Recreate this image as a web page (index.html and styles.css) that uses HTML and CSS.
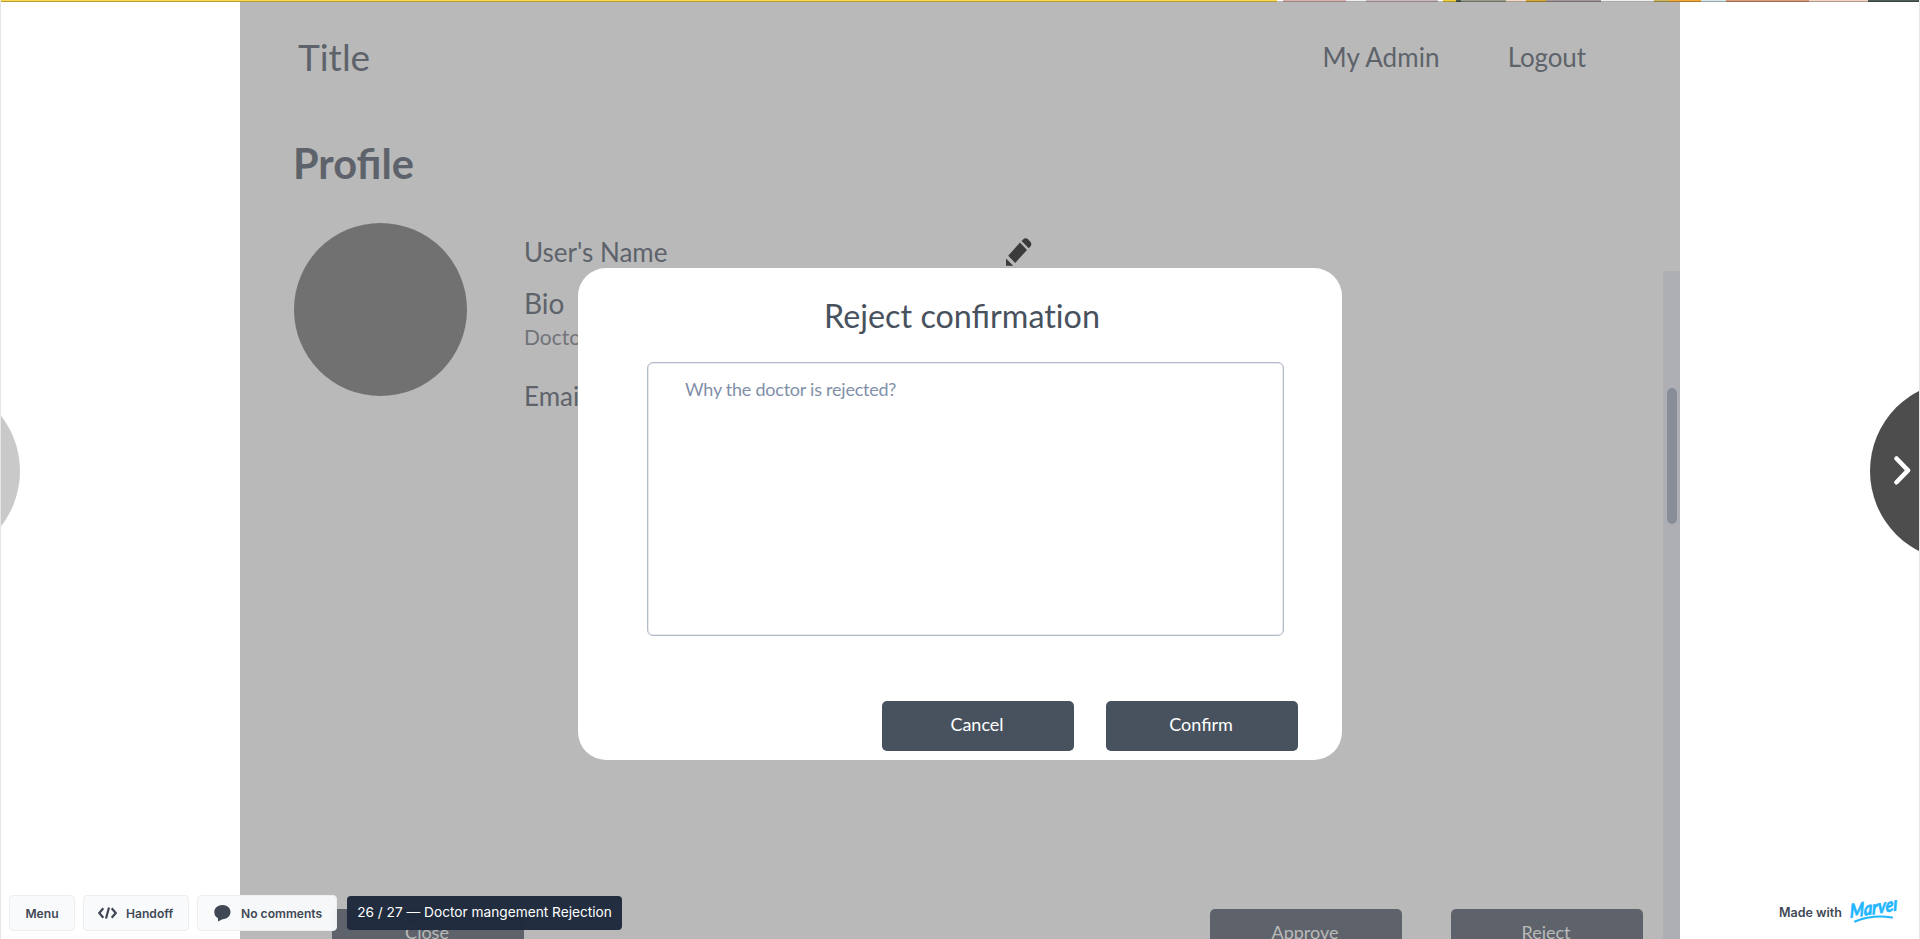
FILE: index.html
```html
<!DOCTYPE html>
<html lang="en">
<head>
<meta charset="utf-8">
<title>Doctor mangement Rejection</title>
<link rel="stylesheet" href="styles.css">
</head>
<body>
<div class="stage">
  <div class="photo-strip"></div>
  <main class="artboard">
    <header class="topbar">
      <div class="brand">Title</div>
      <nav class="nav"><span class="nav-admin">My Admin</span><span class="nav-logout">Logout</span></nav>
    </header>
    <h1 class="heading">Profile</h1>
    <section class="profile">
      <div class="avatar"></div>
      <div class="details">
        <div class="user-name">User's Name</div>
        <div class="bio">Bio</div>
        <div class="bio-text">Doctor</div>
        <div class="email">Email</div>
      </div>
      <svg class="pencil" width="26" height="28" viewBox="0 0 26 28"><path d="M0 20.5V27.7H7.3ZM2.2 17.8L14 4.6L21 11.9L9.2 25ZM15.6 3L17.3 1.2C19 -.3 21 .4 22.5 1.8L24.2 3.6C25.6 5.1 25.8 7 24.4 8.5L22.7 10.3Z"/></svg>
    </section>
    <footer class="page-actions">
      <div class="btn muted btn-close">Close</div>
      <div class="btn muted">Approve</div>
      <div class="btn muted btn-reject">Reject</div>
    </footer>
    <div class="scroll-track"><div class="scroll-thumb"></div></div>
    <section class="modal">
      <h2 class="modal-title">Reject confirmat&zwnj;ion</h2>
      <div class="reason">Why the doctor is rejected?</div>
      <div class="modal-actions"><div class="btn">Cancel</div><div class="btn">Confirm</div></div>
    </section>
  </main>
  <div class="arrow arrow-prev"></div>
  <div class="arrow arrow-next"><svg width="17" height="29" viewBox="0 0 17 29"><path d="M2.5 2.5L14 14.4L2.5 26.3"/></svg></div>
  <div class="toolbar">
    <div class="tool tool-menu">Menu</div>
    <div class="tool tool-handoff"><svg class="icon-code" width="19" height="12" viewBox="0 0 19 12"><path d="M5.3 1.2L1.3 6L5.3 10.8M13.7 1.2L17.7 6L13.7 10.8M11 .5L8 11.5"/></svg><span>Handoff</span></div>
    <div class="tool tool-comments"><svg class="icon-bubble" width="17" height="17" viewBox="0 0 17 17"><path d="M8.5 0C13.2 0 16.5 3 16.5 7S13.2 14 8.5 14.2L4 16.6V13.2C1.5 12 .3 9.8 .3 7C.3 3 3.8 0 8.5 0Z"/></svg><span>No comments</span></div>
    <div class="screen-name">26 / 27 — Doctor mangement Rejection</div>
  </div>
  <div class="made-with"><span>Made with</span>
    <svg class="logo" width="52" height="24" viewBox="0 0 52 24"><text x="0" y="0" transform="translate(1 18) rotate(-9) skewX(-8)" textLength="48" lengthAdjust="spacingAndGlyphs">Marvel</text><path d="M6 21.500C17 17 30 15.500 43 17.500"/></svg>
  </div>
</div>
</body>
</html>
```
FILE: styles.css
```css
* { box-sizing: border-box; }
body { margin: 0; background: #fff; font-family: Lato, "Liberation Sans", sans-serif; }
.stage { position: relative; width: 1920px; height: 939px; overflow: hidden; border: solid #e6e6e6; border-width: 0 1px; }
.photo-strip { height: 2px; background: linear-gradient(90deg, #fbd94e 0 1276px, #fff 1276px 1282px, #d9b3b0 1282px 1345px, #eee 1345px 1365px, #cbb9bc 1365px 1437px, #fff 1437px 1442px, #f0cf3c 1442px 1455px, #4c5a50 1455px 1460px, #9a9c8c 1460px 1505px, #f2d9c8 1505px 1525px, #d3a83a 1525px 1545px, #a5989a 1545px 1600px, #eceef0 1600px 1653px, #c9b75c 1653px 1668px, #f3a93a 1668px 1700px, #d5e9ec 1700px 1725px, #d99a78 1725px 1808px, #f3d6c6 1808px 1867px, #4e5d55 1867px); border-bottom: 1px solid rgba(0,0,0,.28); }
.artboard { position: relative; width: 1440px; height: 937px; margin-left: 239px; background: #b9b9b9; color: #5e636b; display: flex; flex-direction: column; overflow: hidden; }
.topbar { height: 110px; padding: 0 94px 0 58px; display: flex; align-items: center; justify-content: space-between; }
.brand { font-size: 37px; line-height: 44px; }
.nav { display: flex; gap: 68px; font-size: 26px; line-height: 32px; }
.nav-admin { letter-spacing: .1px; }
.nav-logout { letter-spacing: -.1px; }
.heading { margin: 26px 0 0 53px; font-size: 41.5px; line-height: 50px; font-weight: 700; }
.profile { display: flex; height: 190px; margin: 35px 0 0 54px; }
.avatar { width: 173px; height: 173px; border-radius: 50%; background: #717171; }
.details { width: 420px; margin-left: 57px; padding-top: 12px; }
.user-name, .email { font-size: 26px; line-height: 34px; }
.bio { font-size: 28px; line-height: 34px; margin-top: 17px; }
.bio-text { font-size: 21px; line-height: 26px; margin-top: 4px; color: #717479; }
.email { margin-top: 29px; }
.pencil { margin: 15px 0 0 62px; fill: #3b3b3b; }
.page-actions { margin-top: auto; height: 30px; display: flex; padding-left: 92px; }
.btn { width: 192px; height: 50px; border-radius: 5px; background: #48525e; color: #fff; text-align: center; font-size: 18px; line-height: 46px; flex: none; padding-right: 2px; }
.muted { background: #5e636b; color: #b9b9b9; }
.btn-close { margin-right: 686px; }
.btn-reject { margin-left: 49px; }
.scroll-track { position: absolute; right: 0; top: 269px; width: 17px; height: 668px; background: #adafb5; padding: 117px 3px 0 4px; }
.scroll-thumb { height: 136px; border-radius: 5px; background: #878e97; }
.modal { position: absolute; left: 338px; top: 266px; width: 764px; height: 492px; border-radius: 28px; background: #fff; padding-top: 28px; color: #48525e; }
.modal-title { margin: 0 0 0 4px; text-align: center; font-weight: 400; font-size: 32.3px; line-height: 40px; }
.reason { margin: 26px 0 0 69px; width: 637px; height: 274px; border: 1.5px solid #b3bbca; box-shadow: inset 0 0 0 .5px #cdd3dd; border-radius: 6px; padding: 15px 37px; font-size: 18px; letter-spacing: -.24px; line-height: 22px; color: #8190a8; }
.modal-actions { display: flex; justify-content: flex-end; gap: 32px; margin: 65px 44px 0 0; }
.arrow { position: absolute; border-radius: 50%; width: 180px; height: 180px; }
.arrow-prev { left: -161px; top: 381px; background: #c9c9c9; }
.arrow-next { left: 1869px; top: 381px; background: #4d4d4d; padding: 75px 0 0 24px; }
.arrow-next svg { display: block; fill: none; stroke: #fff; stroke-width: 4.5; stroke-linecap: round; stroke-linejoin: round; }
.toolbar { position: absolute; left: 8px; top: 895px; display: flex; font-family: Inter, sans-serif; font-size: 12.1px; font-weight: 600; color: #3f4854; }
.tool { height: 36px; display: flex; align-items: center; border: 1px solid #edeef0; border-radius: 4px; background: rgba(249,250,252,.96); white-space: nowrap; }
.tool-menu { width: 66px; justify-content: center; }
.tool-handoff { width: 106px; margin-left: 8px; padding-left: 14px; gap: 9px; }
.tool-comments { width: 140px; margin-left: 8px; padding-left: 16px; gap: 10px; }
.icon-code { fill: none; stroke: #3f4854; stroke-width: 2.2; }
.icon-bubble { fill: #3f4854; }
.screen-name { margin: 1px 0 0 10px; width: 275px; height: 34px; border-radius: 4px; background: rgba(31,43,60,.98); color: #fff; font-size: 13.7px; font-weight: 400; line-height: 33px; text-align: center; white-space: nowrap; }
.made-with { position: absolute; left: 1778px; top: 900px; display: flex; font: 600 12.5px/26px Inter, sans-serif; color: #3f4854; white-space: nowrap; }
.logo { margin-left: 7px; font: italic 700 19px Lato, sans-serif; fill: #1fb6ff; }
.logo text { stroke: #1fb6ff; stroke-width: .7; stroke-linejoin: round; }
.logo path { fill: none; stroke: #1fb6ff; stroke-width: 2; stroke-linecap: round; }
```
